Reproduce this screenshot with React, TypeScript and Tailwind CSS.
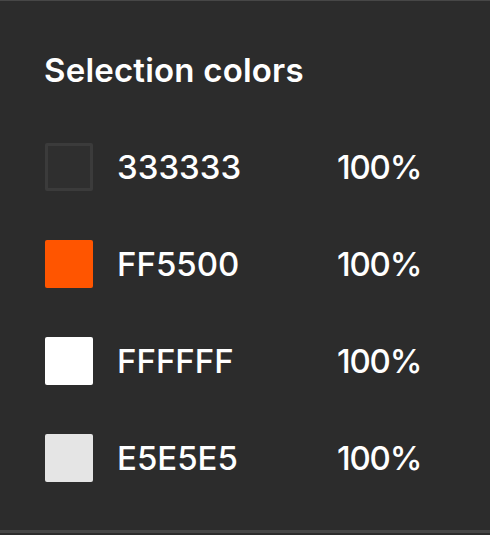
import React from "react";

const rows = [
  { hex: "333333", border: true },
  { hex: "FF5500", border: false },
  { hex: "FFFFFF", border: false },
  { hex: "E5E5E5", border: false },
];

export default function App() {
  return (
    <div
      className="w-[490px] h-[535px] bg-[#2c2c2c] border-t border-[#474747] flex flex-col text-white"
      style={{ fontFamily: "Inter, 'Noto Sans', sans-serif" }}
    >
      <div className="pl-[44px] pt-[45px] h-[94px] text-[33px] leading-[48px] font-semibold tracking-[0.2px]">
        Selection colors
      </div>
      <div className="flex flex-col gap-[49px] pt-[48px]">
        {rows.map((r) => (
          <div key={r.hex} className="flex items-center h-[48px] pl-[45px]">
            {r.border ? (
              <div className="w-[48px] h-[48px] rounded-[2px] border-[3px] border-[#3b3b3b] bg-[#2f2f2f]" />
            ) : (
              <div
                className={
                  r.hex === "FF5500"
                    ? "w-[48px] h-[48px] rounded-[2px] bg-[#ff5500]"
                    : r.hex === "FFFFFF"
                    ? "w-[48px] h-[48px] rounded-[2px] bg-[#ffffff]"
                    : "w-[48px] h-[48px] rounded-[2px] bg-[#e5e5e5]"
                }
              />
            )}
            <div className="ml-[24px] w-[220px] text-[33px] leading-[48px] font-medium">
              {r.hex}
            </div>
            <div className="text-[33px] leading-[48px] font-medium tracking-[-1.2px]">100%</div>
          </div>
        ))}
      </div>
      <div className="flex-1" />
      <div className="h-[3px] bg-[#454545] mb-[2px]" />
    </div>
  );
}
